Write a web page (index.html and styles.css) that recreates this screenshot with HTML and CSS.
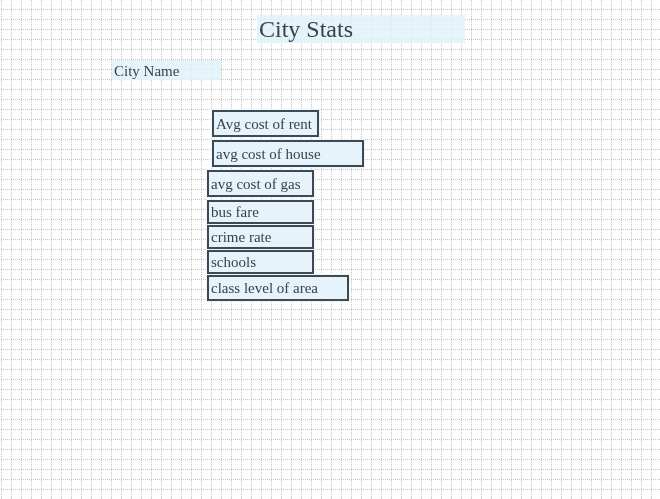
FILE: index.html
```html
<!DOCTYPE html>
<html>
<head>
<meta charset="utf-8">
<link rel="stylesheet" href="styles.css">
</head>
<body>
<svg class="grid" width="660" height="499" aria-hidden="true">
  <defs>
    <pattern id="g" width="10" height="10" patternUnits="userSpaceOnUse">
      <rect x="1" y="0" width="1" height="1" fill="#c8c8c8"/>
      <rect x="1" y="2" width="1" height="1" fill="#c8c8c8"/>
      <rect x="1" y="4" width="1" height="1" fill="#c8c8c8"/>
      <rect x="1" y="6" width="1" height="1" fill="#c8c8c8"/>
      <rect x="1" y="8" width="1" height="1" fill="#c8c8c8"/>
      <rect x="1" y="9" width="1" height="1" fill="#c8c8c8"/>
      <rect x="3" y="9" width="1" height="1" fill="#c8c8c8"/>
      <rect x="5" y="9" width="1" height="1" fill="#c8c8c8"/>
      <rect x="7" y="9" width="1" height="1" fill="#c8c8c8"/>
      <rect x="9" y="9" width="1" height="1" fill="#c8c8c8"/>
    </pattern>
  </defs>
  <rect width="660" height="499" fill="url(#g)"/>
</svg>
<main class="page">
  <h1 class="title">City Stats</h1>
  <div class="city">City Name</div>
  <ul class="fields">
    <li class="field f1">Avg cost of rent</li>
    <li class="field f2">avg cost of house</li>
    <li class="field f3">avg cost of gas</li>
    <li class="field small f4">bus fare</li>
    <li class="field small f4">crime rate</li>
    <li class="field small f4">schools</li>
    <li class="field small f7">class level of area</li>
  </ul>
</main>
</body>
</html>
```
FILE: styles.css
```css
html, body {
  margin: 0;
  padding: 0;
  background: #ffffff;
}
body {
  width: 660px;
  height: 499px;
  overflow: hidden;
  font-family: "Liberation Serif", "DejaVu Serif", serif;
  color: #36434d;
}
.grid {
  position: fixed;
  left: 0;
  top: 0;
  z-index: 0;
}
.page {
  position: relative;
  z-index: 1;
  padding-top: 15px;
}
.title {
  margin: 0 0 0 257px;
  width: 208px;
  height: 28px;
  padding-left: 2px;
  box-sizing: border-box;
  background: rgba(225, 241, 250, 0.85);
  font-weight: normal;
  font-size: 24px;
  line-height: 28px;
}
.city {
  margin: 17px 0 0 112px;
  width: 109px;
  height: 20px;
  padding-left: 2px;
  box-sizing: border-box;
  background: rgba(225, 241, 250, 0.85);
  font-size: 15px;
  line-height: 22px;
}
.fields {
  list-style: none;
  margin: 30px 0 0 0;
  padding: 0;
  display: flex;
  flex-direction: column;
  align-items: flex-start;
}
.field {
  box-sizing: border-box;
  height: 27px;
  margin-bottom: 3px;
  border: 2px solid #3d4a53;
  background: #e6f3fa;
  box-shadow: 0 0 0 1px #eef6fa;
  padding-left: 2px;
  font-size: 15px;
  line-height: 24px;
}
.small {
  height: 24px;
  margin-bottom: 1px;
  line-height: 21px;
}
.f1 { margin-left: 212px; width: 107px; }
.f2 { margin-left: 212px; width: 152px; }
.f3 { margin-left: 207px; width: 107px; }
.f4 { margin-left: 207px; width: 107px; }
.f7 { margin-left: 207px; width: 142px; height: 26px; line-height: 23px; }
```
